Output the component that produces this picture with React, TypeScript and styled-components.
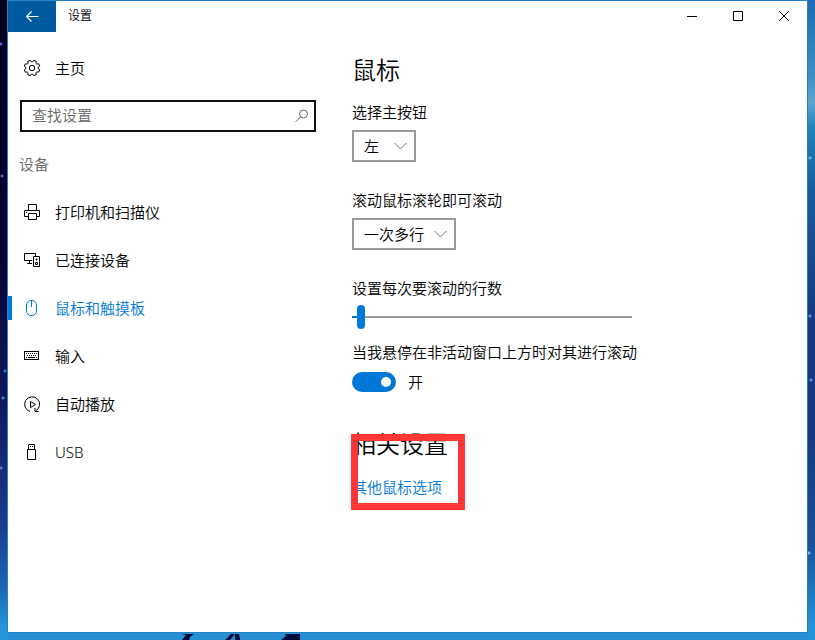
import React, { useState } from "react";
import styled, { createGlobalStyle, css } from "styled-components";

const ACCENT = "#0078d7";

const GlobalStyle = createGlobalStyle`
  *, *::before, *::after { box-sizing: border-box; }
  body {
    margin: 0;
    color: #000;
    font: 350 15px/20px "Noto Sans", "Noto Sans CJK SC", sans-serif;
  }
  button, input, select { font: inherit; color: inherit; }
`;

const Desktop = styled.div`
  min-height: 100vh;
  display: flex;
  flex-direction: column;
  padding: 0 7px;
  background:
    radial-gradient(circle at 1px 44px, #5a5fc0 0 1px, transparent 2px) no-repeat,
    radial-gradient(circle at 2px 176px, #5a5fa0 0 1px, transparent 2px) no-repeat,
    radial-gradient(circle at 5px 371px, #2f7fc8 0 1px, transparent 2px) no-repeat,
    radial-gradient(circle at 3px 398px, #4a80c8 0 1px, transparent 2px) no-repeat,
    radial-gradient(circle at 1px 468px, #4d7fc4 0 1px, transparent 2px) no-repeat,
    radial-gradient(circle at calc(100% - 5px) 158px, #6fb4dc 0 1px, transparent 2px) no-repeat,
    radial-gradient(circle at calc(100% - 5px) 316px, #5a9ad0 0 1px, transparent 2px) no-repeat,
    radial-gradient(circle at calc(100% - 4px) 380px, #5a9ad0 0 1px, transparent 2px) no-repeat,
    radial-gradient(circle at calc(100% - 6px) 553px, #7fb8e4 0 1px, transparent 2px) no-repeat,
    linear-gradient(#03001e 0%, #060433 40%, #10175a 62%, #1a3c8c 82%, #1c66b4 92%, #2596dc 98%)
      left top / 8px 100% no-repeat,
    linear-gradient(#1c6cae 0%, #3f8fc2 12%, #62a3cf 16%, #2182b8 20%, #1a5b9c 30%, #16397e 50%, #16397e 68%, #1a5298 85%, #2494d8 98%)
      right top / 8px 100% no-repeat,
    #2690d4;
`;

const WindowFrame = styled.div`
  flex: 1;
  display: flex;
  flex-direction: column;
  background: #fff;
  border: 1px solid #2482c8;
`;

const Wallpaper = styled.footer`
  height: 7px;
  padding-left: 21%;
  svg { display: block; }
`;

const TitleBar = styled.header`
  display: flex;
  height: 31px;
  align-items: stretch;
`;

const WindowTitle = styled.span`
  flex: 1;
  padding-left: 12px;
  font-size: 12px;
  line-height: 30px;
`;

const CaptionButton = styled.button<{ $back?: boolean }>`
  display: grid;
  place-items: center;
  width: ${(p) => (p.$back ? 48 : 46)}px;
  padding: 0 0 1px;
  border: 0;
  color: ${(p) => (p.$back ? "#fff" : "#000")};
  background: ${(p) => (p.$back ? "#005a9e" : "transparent")};
`;

const Body = styled.div`
  flex: 1;
  display: flex;
`;

const Sidebar = styled.nav`
  flex: 0 0 308px;
  padding-top: 12px;
`;

const NavLink = styled.a<{ $active?: boolean }>`
  display: flex;
  align-items: center;
  gap: 14px;
  height: 48px;
  padding-left: 16px;
  color: #000;
  text-decoration: none;
  position: relative;
  svg { flex: none; }
  ${(p) =>
    p.$active &&
    css`
      color: ${ACCENT};
      &::before {
        content: "";
        position: absolute;
        left: 0;
        width: 4px;
        height: 24px;
        background: ${ACCENT};
      }
    `}
`;

const SearchBox = styled.label`
  display: flex;
  align-items: center;
  height: 32px;
  margin: 8px 0 0 12px;
  padding: 0 5px 0 10px;
  border: 2px solid #111;
`;

const SearchInput = styled.input`
  flex: 1;
  min-width: 0;
  padding: 0 0 2px;
  border: 0;
  outline: 0;
  background: transparent;
  &::placeholder { color: #666; opacity: 1; }
`;

const GroupTitle = styled.h2`
  margin: 0;
  padding: 22px 0 14px 11px;
  font-size: 15px;
  font-weight: inherit;
  color: #666;
`;

const NavList = styled.ul`
  margin: 0;
  padding: 0;
  list-style: none;
`;

const Content = styled.main`
  flex: 1;
  padding: 22px 24px 0 36px;
`;

const Heading = styled.h1`
  margin: 0 0 16px;
  font-size: 24px;
  line-height: 32px;
  font-weight: inherit;
`;

const Field = styled.div<{ $compact?: boolean }>`
  display: flex;
  flex-direction: column;
  align-items: flex-start;
  gap: ${(p) => (p.$compact ? 7 : 8)}px;
  margin-bottom: ${(p) => (p.$compact ? 13 : 28)}px;
`;

const SelectWrap = styled.div`
  display: grid;
  align-items: center;
  & > * { grid-area: 1 / 1; }
  svg { justify-self: end; margin-right: 9px; pointer-events: none; }
`;

const SelectBox = styled.select`
  appearance: none;
  height: 32px;
  min-width: 64px;
  padding: 0 29px 0 10px;
  border: 2px solid #999;
  border-radius: 0;
  background: #fff;
`;

const Slider = styled.input`
  appearance: none;
  width: 280px;
  max-width: 100%;
  height: 24px;
  margin: 0;
  background: linear-gradient(90deg, ${ACCENT} 8px, #999 8px) center / 100% 2px no-repeat;
  &::-webkit-slider-thumb {
    appearance: none;
    width: 8px;
    height: 24px;
    border-radius: 4px;
    background: ${ACCENT};
  }
`;

const ToggleRow = styled.label`
  display: flex;
  align-items: center;
  gap: 12px;
  margin-top: 2px;
`;

const Toggle = styled.input`
  appearance: none;
  display: flex;
  align-items: center;
  width: 44px;
  height: 20px;
  margin: 0;
  padding: 0 5px;
  border-radius: 10px;
  background: #999;
  &::before {
    content: "";
    width: 10px;
    height: 10px;
    border-radius: 50%;
    background: #fff;
  }
  &:checked { background: ${ACCENT}; justify-content: flex-end; }
`;

const Related = styled.section`
  position: relative;
  width: max-content;
  margin-top: 36px;
`;

const RelatedTitle = styled.h2`
  margin: 0 0 17px;
  font-size: 24px;
  line-height: 32px;
  font-weight: inherit;
`;

const RelatedLink = styled.a`
  display: block;
  color: ${ACCENT};
  text-decoration: none;
`;

const Highlight = styled.div`
  position: absolute;
  top: 6px;
  left: -1px;
  width: 114px;
  height: 76px;
  border: 7px solid #ff3638;
  pointer-events: none;
`;

const Icon = ({ children, size = 17 }: { children: React.ReactNode; size?: number }) => (
  <svg width={size} height={size} viewBox={`0 0 ${size} ${size}`} fill="none" stroke="currentColor" aria-hidden="true">
    {children}
  </svg>
);

const gearPath = (() => {
  const points: string[] = [];
  for (let i = 0; i < 8; i++) {
    const parts: [number, number][] = [[-16, 6.2], [-10, 7.9], [10, 7.9], [16, 6.2]];
    for (const [offset, radius] of parts) {
      const a = ((i * 45 + 22 + offset) * Math.PI) / 180;
      points.push(`${(8 + radius * Math.cos(a)).toFixed(2)} ${(8 + radius * Math.sin(a)).toFixed(2)}`);
    }
  }
  return `M${points.join("L")}Z`;
})();

const GearIcon = () => (
  <Icon>
    <path d={gearPath} strokeLinejoin="round" />
    <circle cx="8" cy="8" r="2.7" />
  </Icon>
);

const PrinterIcon = () => (
  <Icon>
    <path d="M4.500 6.500V.5h8v6M4.500 12.500h-4v-6h15v6h-3M4.500 9.500h8v6h-8zM2 8.500h1" />
  </Icon>
);

const DevicesIcon = () => (
  <Icon>
    <path d="M8 8.500H.5v-7h11V4M5.500 8.500v3M3 11.500h5M9.500 4.500h6v10h-6z" />
    <path d="M12 7h1v1h-1zM11.500 10.500h2v2h-2z" />
  </Icon>
);

const MouseIcon = () => (
  <Icon>
    <rect x="2.500" y=".5" width="10" height="15" rx="4.500" />
    <path d="M7.500 1v6" />
  </Icon>
);

const KeyboardIcon = () => (
  <Icon>
    <rect x=".5" y="3.500" width="14" height="8" />
    <path d="M2 5.500h11M3 7.500h10" strokeDasharray="1 1" />
    <path d="M2 9.500h1M4 9.500h7M12 9.500h1" />
  </Icon>
);

const AutoplayIcon = () => (
  <Icon>
    <path d="M6 15.500A7.500 7.500 0 1 1 11.500 15M14.500 15.500h-3.500V12M6.500 5.500v6l5-3z" />
  </Icon>
);

const UsbIcon = () => (
  <Icon>
    <path d="M4.500 5.500v-5h6v5M3.500 5.500h8v10h-8zM6 2.500h1M8 2.500h1" />
  </Icon>
);

const Chevron = () => (
  <svg width="13" height="8" viewBox="0 0 13 8" fill="none" stroke="#777" aria-hidden="true">
    <path d="M.5 1l6 6 6-6" />
  </svg>
);

const devicePages = [
  { label: "打印机和扫描仪", icon: <PrinterIcon /> },
  { label: "已连接设备", icon: <DevicesIcon /> },
  { label: "鼠标和触摸板", icon: <MouseIcon />, active: true },
  { label: "输入", icon: <KeyboardIcon /> },
  { label: "自动播放", icon: <AutoplayIcon /> },
  { label: "USB", icon: <UsbIcon /> },
];

export default function App() {
  const [lines, setLines] = useState(3);
  const [hoverScroll, setHoverScroll] = useState(true);

  return (
    <>
      <GlobalStyle />
      <Desktop>
        <WindowFrame>
          <TitleBar>
            <CaptionButton $back aria-label="返回">
              <svg width="13" height="11" viewBox="0 0 13 11" fill="none" stroke="currentColor">
                <path d="M12.500 5.500H1M5.500.5l-5 5 5 5" strokeWidth="1.200" />
              </svg>
            </CaptionButton>
            <WindowTitle>设置</WindowTitle>
            <CaptionButton aria-label="最小化">
              <svg width="10" height="10" fill="none" stroke="currentColor"><path d="M0 5.500h10" /></svg>
            </CaptionButton>
            <CaptionButton aria-label="最大化">
              <svg width="10" height="10" fill="none" stroke="currentColor"><path d="M.5.5h9v9h-9z" /></svg>
            </CaptionButton>
            <CaptionButton aria-label="关闭">
              <svg width="10" height="10" fill="none" stroke="currentColor"><path d="M0 0l10 10M10 0L0 10" /></svg>
            </CaptionButton>
          </TitleBar>
          <Body>
            <Sidebar>
              <NavLink href="#home"><GearIcon />主页</NavLink>
              <SearchBox>
                <SearchInput type="text" placeholder="查找设置" aria-label="查找设置" />
                <svg width="14" height="14" viewBox="0 0 14 14" fill="none" stroke="#666" aria-hidden="true">
                  <circle cx="8.500" cy="5" r="4" />
                  <path d="M5.500 8L.5 13" />
                </svg>
              </SearchBox>
              <GroupTitle>设备</GroupTitle>
              <NavList>
                {devicePages.map((page) => (
                  <li key={page.label}>
                    <NavLink href="#page" $active={page.active}>{page.icon}{page.label}</NavLink>
                  </li>
                ))}
              </NavList>
            </Sidebar>
            <Content>
              <Heading>鼠标</Heading>
              <Field>
                <label htmlFor="primary">选择主按钮</label>
                <SelectWrap>
                  <SelectBox id="primary"><option>左</option></SelectBox>
                  <Chevron />
                </SelectWrap>
              </Field>
              <Field>
                <label htmlFor="wheel">滚动鼠标滚轮即可滚动</label>
                <SelectWrap>
                  <SelectBox id="wheel"><option>一次多行</option></SelectBox>
                  <Chevron />
                </SelectWrap>
              </Field>
              <Field $compact>
                <label htmlFor="lines">设置每次要滚动的行数</label>
                <Slider
                  id="lines"
                  type="range"
                  min={1}
                  max={100}
                  value={lines}
                  onChange={(e) => setLines(Number(e.target.value))}
                />
              </Field>
              <Field>
                <label htmlFor="hover">当我悬停在非活动窗口上方时对其进行滚动</label>
                <ToggleRow>
                  <Toggle
                    id="hover"
                    type="checkbox"
                    checked={hoverScroll}
                    onChange={(e) => setHoverScroll(e.target.checked)}
                  />
                  {hoverScroll ? "开" : "关"}
                </ToggleRow>
              </Field>
              <Related>
                <RelatedTitle>相关设置</RelatedTitle>
                <RelatedLink href="#options">其他鼠标选项</RelatedLink>
                <Highlight />
              </Related>
            </Content>
          </Body>
        </WindowFrame>
        <Wallpaper>
          <svg width="126" height="7" viewBox="0 0 126 7" fill="#030a3c" aria-hidden="true">
            <path d="M6 1h13l-4 3-1 3H7l4-5zM56 1h4l-5 6h-5zM60 1h4l1 6h-5zM110 1h15v6h-19l5-4z" />
          </svg>
        </Wallpaper>
      </Desktop>
    </>
  );
}
